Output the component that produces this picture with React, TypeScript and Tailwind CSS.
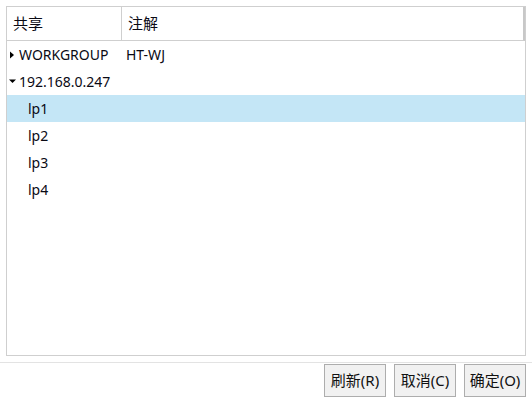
import React from "react";

const font = { fontFamily: '"Noto Sans", "Noto Sans CJK SC", sans-serif' };

function Row({ children, selected }: { children: React.ReactNode; selected?: boolean }) {
  return (
    <div className={`flex h-[27px] items-center ${selected ? "bg-[#c4e6f6]" : ""}`}>{children}</div>
  );
}

function TriRight() {
  return (
    <svg width="4" height="8" viewBox="0 0 4 8" className="mr-[5px] ml-[3px]">
      <path d="M0 0.5 L4 4 L0 7.5 Z" fill="#000" />
    </svg>
  );
}
function TriDown() {
  return (
    <svg width="7" height="5" viewBox="0 0 7 5" className="mr-[3px] ml-[2px]">
      <path d="M0 0.5 L7 0.5 L3.5 4 Z" fill="#000" />
    </svg>
  );
}

function Btn({ label }: { label: string }) {
  return (
    <button className="h-[33px] w-[62px] border border-[#adadad] bg-[#f1f1f1] text-[15px] text-[#111]">
      {label}
    </button>
  );
}

export default function App() {
  return (
    <div className="w-[532px] h-[398px] bg-white flex flex-col text-[14px] text-[#0a0a14]" style={font}>
      <div className="mt-[6px] ml-[6px] mr-[6px] h-[350px] border border-[#cfcfcf] flex flex-col">
        <div className="h-[34px] flex border-b border-[#cfcfcf] border-r-2 border-r-[#c8c8c8] text-[15px]">
          <div className="w-[115px] border-r border-[#cfcfcf] flex items-center pl-[6px]">共享</div>
          <div className="flex-1 flex items-center pl-[6px]">注解</div>
        </div>
        <div className="flex flex-col">
          <Row>
            <div className="w-[115px] flex items-center">
              <TriRight />
              WORKGROUP
            </div>
            <div className="pl-[4px]">HT-WJ</div>
          </Row>
          <Row>
            <TriDown />
            192.168.0.247
          </Row>
          <Row selected>
            <span className="pl-[21px]">lp1</span>
          </Row>
          <Row>
            <span className="pl-[21px]">lp2</span>
          </Row>
          <Row>
            <span className="pl-[21px]">lp3</span>
          </Row>
          <Row>
            <span className="pl-[21px]">lp4</span>
          </Row>
        </div>
      </div>
      <div className="mt-[6px] border-t border-[#e3e3e3] flex justify-end gap-[8px] pr-[6px] pt-[1px]">
        <Btn label="刷新(R)" />
        <Btn label="取消(C)" />
        <Btn label="确定(O)" />
      </div>
    </div>
  );
}
